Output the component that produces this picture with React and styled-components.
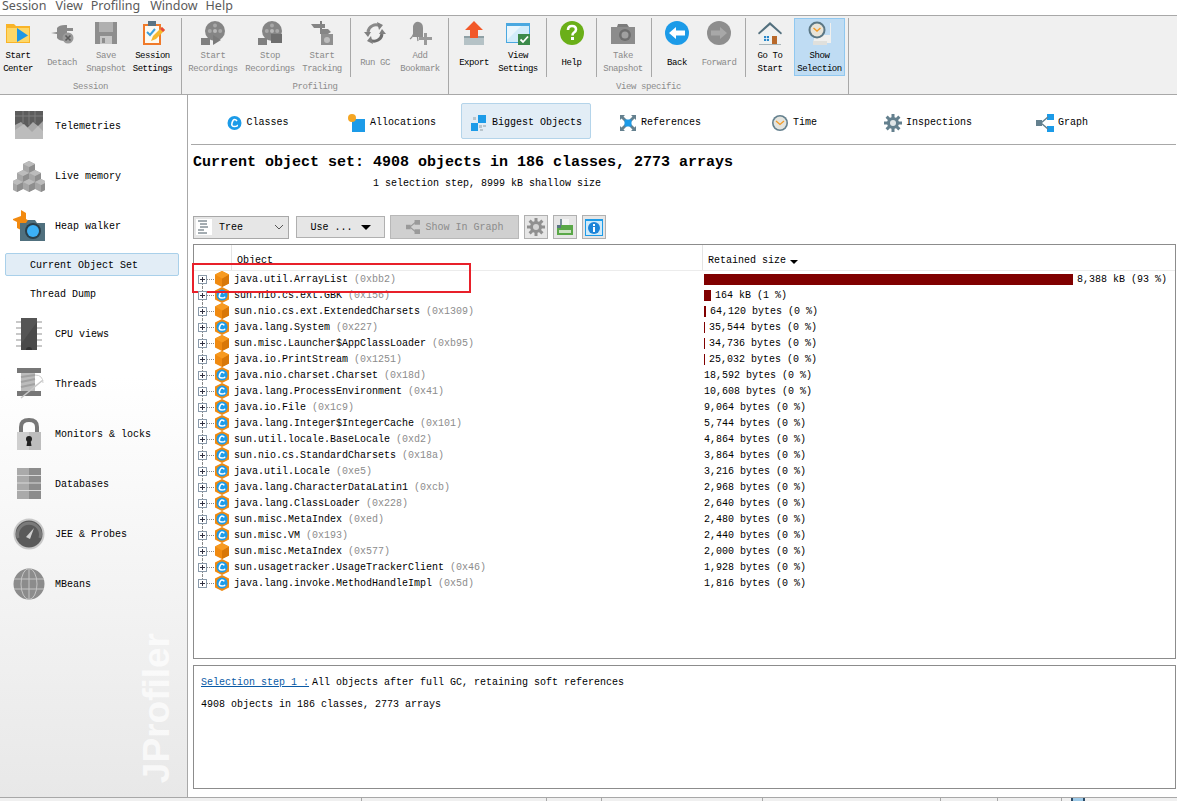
import styled, { createGlobalStyle } from "styled-components";

const GlobalStyle = createGlobalStyle`
  html, body {
    margin: 0;
    padding: 0;
    background: #fff;
    overflow: hidden;
  }
  * { box-sizing: border-box; }
`

const Page = styled.div`
  width: 1177px;
  height: 801px;
  display: flex;
  flex-direction: column;
  overflow: hidden;
  font-family: "Liberation Mono", monospace;
  font-size: 10px;
  color: #000;
  background: #fff;
`
const MenuBar = styled.div`
  height: 16px;
  flex: none;
  display: flex;
  padding-left: 2px;
  overflow: hidden;
  border-bottom: 1px solid #a8a8a8;
`
const MenuItem = styled.div`
  font-family: "Noto Sans", sans-serif;
  font-size: 12.5px;
  line-height: 12px;
  color: #5a5a5a;
  margin-right: ${p => p.$gap}px;
`
const Toolbar = styled.div`
  height: 79px;
  flex: none;
  display: flex;
  background: #f0f0f0;
  border-bottom: 1px solid #a8a8a8;
`
const Group = styled.div`
  width: ${p => p.$width}px;
  height: 76px;
  margin-top: 2px;
  display: flex;
  flex-direction: column;
  border-right: 1px solid #a8a8a8;
`
const GroupButtons = styled.div`
  display: flex;
  height: 62px;
  flex: none;
`
const GroupTitle = styled.div`
  text-align: center;
  font-size: 9px;
  letter-spacing: -0.4px;
  line-height: 14px;
  color: #8c8c8c;
`
const Separator = styled.div`
  width: 1px;
  height: 59px;
  flex: none;
  background: #a8a8a8;
  margin-left: ${p => p.$before || 0}px;
`
const ToolButton = styled.div`
  width: ${p => p.$width}px;
  flex: none;
  display: flex;
  flex-direction: column;
  align-items: center;
  height: 58px;
  border: 1px solid ${p => (p.$active ? "#90c8f0" : "transparent")};
  background: ${p => (p.$active ? "#bfdcf3" : "transparent")};
`
const ToolIcon = styled.div`
  height: 28px;
  flex: none;
  display: flex;
  align-items: center;
  justify-content: center;
`
const ToolLabel = styled.div`
  height: 26px;
  margin-top: 3px;
  flex: none;
  display: flex;
  align-items: center;
  text-align: center;
  white-space: pre;
  font-size: 9px;
  letter-spacing: -0.45px;
  line-height: 13px;
  color: ${p => (p.$disabled ? "#8a8a8a" : "#000")};
`
const Body = styled.div`
  flex: 1;
  display: flex;
  min-height: 0;
`
const Sidebar = styled.div`
  width: 188px;
  flex: none;
  position: relative;
  padding-top: 6px;
  background: linear-gradient(#fff 0, #fff 40%, #e8e8e8 100%);
  border-right: 1px solid #a8a8a8;
  overflow: hidden;
`
const NavItem = styled.div`
  height: 50px;
  display: flex;
  align-items: center;
  padding-left: 13px;
  gap: 10px;
`
const NavIcon = styled.div`
  width: 32px;
  height: 32px;
  flex: none;
`
const SubList = styled.div`
  display: flex;
  flex-direction: column;
  gap: 6px;
  margin: 2px 0 4px 5px;
`
const SubItem = styled.div`
  width: 174px;
  height: 23px;
  line-height: 24px;
  padding-left: 24px;
  border: 1px solid ${p => (p.$selected ? "#a9d0ea" : "transparent")};
  border-radius: 2px;
  background: ${p => (p.$selected ? "#e2edf6" : "transparent")};
`
const Watermark = styled.div`
  position: absolute;
  left: 135px;
  top: 538px;
  writing-mode: vertical-rl;
  transform: rotate(180deg);
  font-family: "Liberation Sans", sans-serif;
  font-weight: bold;
  font-size: 37px;
  line-height: 44px;
  color: rgba(255, 255, 255, 0.7);
`
const Main = styled.div`
  flex: 1;
  min-width: 0;
  display: flex;
  flex-direction: column;
  padding: 0 1px 8px 5px;
`
const TabBar = styled.div`
  height: 50px;
  flex: none;
  display: flex;
  margin-left: -2px;
  padding-top: 8px;
  border-bottom: 1px solid #a8a8a8;
  align-items: flex-start;
`
const Tab = styled.div`
  width: 130px;
  height: 36px;
  flex: none;
  margin: 0 2px;
  padding-top: 3px;
  display: flex;
  align-items: center;
  justify-content: center;
  gap: 4px;
  border: 1px solid ${p => (p.$selected ? "#b4d4ea" : "transparent")};
  border-radius: 2px;
  background: ${p => (p.$selected ? "#e2edf6" : "transparent")};
`
const Heading = styled.h1`
  margin: 9px 0 0;
  font-size: 15px;
  line-height: 18px;
  font-weight: bold;
  white-space: pre;
`
const SubHeading = styled.div`
  margin-top: 5px;
  padding-left: 180px;
  line-height: 14px;
`
const ActionBar = styled.div`
  height: 24px;
  margin-top: 24px;
  flex: none;
  display: flex;
  align-items: center;
`
const Select = styled.div`
  width: 96px;
  height: 23px;
  display: flex;
  align-items: center;
  padding: 0 4px 0 2px;
  gap: 7px;
  border: 1px solid #a8a8a8;
  background: #e6e6e6;
  font-size: 10px;
`
const DropButton = styled.div`
  width: 89px;
  height: 22px;
  margin-left: 7px;
  display: flex;
  align-items: center;
  justify-content: center;
  gap: 8px;
  border: 1px solid #b0b0b0;
  background: #e6e6e6;
`
const DownTriangle = styled.span`
  width: 0;
  height: 0;
  border-left: ${p => p.$size}px solid transparent;
  border-right: ${p => p.$size}px solid transparent;
  border-top: ${p => p.$size}px solid #000;
`
const HeaderTriangle = styled(DownTriangle)`
  margin-bottom: 4px;
`
const GraphButton = styled.div`
  width: 129px;
  height: 24px;
  margin-left: 5px;
  display: flex;
  align-items: center;
  justify-content: center;
  gap: 4px;
  border: 1px solid #b8b8b8;
  background: #d0d0d0;
  color: #8c8c8c;
`
const SquareButton = styled.div`
  width: 24px;
  height: 24px;
  margin-left: ${p => p.$gap}px;
  display: flex;
  align-items: center;
  justify-content: center;
  border: 1px solid #b0b0b0;
  background: #e6e6e6;
`
const TablePanel = styled.div`
  height: 415px;
  margin-top: 5px;
  flex: none;
  border: 1px solid #8c8c8c;
  position: relative;
`
const TableHeader = styled.div`
  height: 26px;
  display: grid;
  grid-template-columns: 37px 471px 1fr;
  border-bottom: 1px solid #ececec;
`
const HeaderCell = styled.div`
  display: flex;
  align-items: flex-end;
  gap: 4px;
  padding: 0 0 2px 5px;
  line-height: 14px;
  border-left: ${p => (p.$first ? "none" : "1px solid #e4e4e4")};
`
const TreeRow = styled.div`
  height: 16px;
  display: grid;
  grid-template-columns: 508px 1fr;
  position: relative;
  &::before {
    content: "";
    position: absolute;
    left: 8px;
    top: ${p => (p.$first ? 8 : 0)}px;
    bottom: ${p => (p.$last ? 8 : 0)}px;
    border-left: 1px dotted #888;
  }
`
const TreeCell = styled.div`
  display: flex;
  align-items: center;
  padding-left: 4px;
  white-space: pre;
`
const Expander = styled.span`
  width: 9px;
  height: 9px;
  flex: none;
  position: relative;
  z-index: 1;
  border: 1px solid #8a9aaa;
  background: linear-gradient(to right, transparent 1px, #334 1px, #334 6px, transparent 6px) center / 100% 1px no-repeat,
    linear-gradient(transparent 1px, #334 1px, #334 6px, transparent 6px) center / 1px 100% no-repeat, #fff;
`
const Connector = styled.span`
  width: 7px;
  flex: none;
  border-top: 1px dotted #888;
`
const ClassIcon = styled.svg`
  flex: none;
  margin-right: 4px;
`
const RowText = styled.span`
  margin-top: 1px;
`
const ObjectId = styled.span`
  color: #8c8c8c;
`
const SizeCell = styled.div`
  display: flex;
  align-items: center;
  padding-left: 2px;
  gap: 4px;
  white-space: pre;
`
const SizeBar = styled.span`
  width: ${p => p.$width}px;
  height: 11px;
  flex: none;
  background: #800000;
`
const Highlight = styled.div`
  position: absolute;
  left: -2px;
  top: 18px;
  width: 279px;
  height: 30px;
  border: 2px solid #e8202a;
  pointer-events: none;
`
const DetailPanel = styled.div`
  flex: 1;
  margin-top: 6px;
  padding: 10px 7px;
  border: 1px solid #8c8c8c;
  line-height: 14px;
`
const DetailLine = styled.div`
  margin-bottom: 8px;
`
const DetailLink = styled.span`
  color: #0a5aa5;
  text-decoration: underline;
  margin-right: 3px;
`
const StatusBar = styled.div`
  height: 4px;
  flex: none;
  display: flex;
  border-top: 1px solid #a8a8a8;
  background: #f0f0f0;
  overflow: hidden;
`
const StatusCell = styled.div`
  width: ${p => p.$width}px;
  flex: none;
  border-right: 1px solid #a8a8a8;
`
const StatusIcon = styled.div`
  width: 14px;
  height: 3px;
  margin-left: 9px;
  background: #9ecae8;
  border-left: 2px solid #2a4a66;
  border-right: 2px solid #2a4a66;
`

// toolbar icons, all on a 24 box
const Ico = ({ children, w = 24, h = 24, vb = "0 0 24 24" }) => (
  <svg width={w} height={h} viewBox={vb}>{children}</svg>
)
const StartCenterIcon = () => (
  <Ico>
    <path d="M0 3h8l2 2h14v17H0z" fill="#f9b428" />
    <path d="M1 7h22v14H1z" fill="#fdd768" />
    <path d="M11 7l11 7.5L11 21z" fill="#1e96e6" />
  </Ico>
)
const DetachIcon = () => (
  <Ico>
    <path d="M1 12l6-1V7q2-3 8-3h2v16h-2q-6 0-8-3v-4z" fill="#8a8a8a" />
    <path d="M17 7h6v3h-6zM17 14h2v3h-2z" fill="#8a8a8a" />
    <circle cx="18" cy="17" r="5.5" fill="#9a9a9a" />
    <path d="M15.5 14.5l5 5M20.5 14.5l-5 5" stroke="#5c5c5c" strokeWidth="1.6" />
  </Ico>
)
const SaveIcon = () => (
  <Ico>
    <path d="M1 1h22v22H1z" fill="#8e8e8e" />
    <path d="M5 1h14v10H5z" fill="#b0b0b0" />
    <path d="M6 15h12v8H6z" fill="#c6c6c6" />
    <path d="M8 17h3v5H8z" fill="#8e8e8e" />
  </Ico>
)
const SettingsIcon = () => (
  <Ico>
    <path d="M2 3h18v21H2z" fill="#f07a2a" />
    <path d="M4 5h14v17H4z" fill="#fdfaf2" />
    <path d="M7 0h8v5H7z" fill="#5a7484" />
    <path d="M6 11l3 3 5-6" stroke="#3ca0dc" strokeWidth="2" fill="none" />
    <path d="M10 20l2-5 9-9 3 3-9 9z" fill="#f5b82e" />
    <path d="M19 8l2-2 3 3-2 2z" fill="#e8483c" />
  </Ico>
)
const ReelIcon = ({ stop }) => (
  <Ico>
    <circle cx="14" cy="10" r="10" fill="#858585" />
    <circle cx="14" cy="10" r="2" fill="#b8b8b8" />
    <circle cx="14" cy="4.5" r="2" fill="#a8a8a8" />
    <circle cx="8.8" cy="10" r="2" fill="#a8a8a8" />
    <circle cx="19.2" cy="10" r="2" fill="#a8a8a8" />
    <path d="M0 17h9v7H0z" fill="#808080" />
    {stop ? <path d="M13 13h11v9H13z" fill="#6e6e6e" /> : <path d="M12 14l8 5-8 5z" fill="#7a7a7a" />}
  </Ico>
)
const TrackingIcon = () => (
  <Ico>
    <path d="M10 0h2v10h-2z" fill="#808080" />
    <path d="M1 3h14v4H4zM10 8h8l3 3-3 2h-8z" fill="#858585" />
    <path d="M11 13h12v11H11z" fill="#909090" />
    <circle cx="17" cy="19" r="3" fill="#bdbdbd" />
  </Ico>
)
const GcIcon = () => (
  <Ico>
    <path d="M5 11a8 8 0 0 1 12-6" stroke="#8a8a8a" strokeWidth="3" fill="none" />
    <path d="M19 13a8 8 0 0 1-12 6" stroke="#6f6f6f" strokeWidth="3" fill="none" />
    <path d="M14 1l6 3-4 5zM10 23l-6-3 4-5zM1 11h7l-3 5zM23 13h-7l3-5z" fill="#808080" />
  </Ico>
)
const BookmarkIcon = () => (
  <Ico>
    <path d="M5 5q2-5 6-4t4 6v9H5z" fill="#8e8e8e" />
    <path d="M7 7q-1 8-5 11M9 7q0 8 1 13" stroke="#8e8e8e" strokeWidth="1.3" fill="none" />
    <path d="M16 12h3v4h5v3h-5v5h-3v-5h-5v-3h5z" fill="#9a9a9a" />
  </Ico>
)
const ExportIcon = () => (
  <Ico>
    <path d="M2 15h20v9H2z" fill="#b5c2c6" />
    <path d="M2 15h20v2H2z" fill="#8fa0a5" />
    <path d="M12 0l9 9h-5v8H8V9H3z" fill="#f2592a" />
  </Ico>
)
const ViewSettingsIcon = () => (
  <Ico>
    <path d="M0 2h24v20H0z" fill="#4aa8e0" />
    <path d="M1 5h22v16H1z" fill="#d2ecfa" />
    <path d="M1 5h14l-14 14z" fill="#eaf6fd" />
    <path d="M12 13h12v11H12z" fill="#3c8a4a" />
    <path d="M14.5 18.5l2.5 2.5 5-5.5" stroke="#fff" strokeWidth="1.8" fill="none" />
  </Ico>
)
const HelpIcon = () => (
  <Ico>
    <circle cx="12" cy="12" r="12" fill="#6aaf18" />
    <path d="M8 9q0-4 4-4t4 3.5q0 2-2.5 3.5-1 .7-1 2.5" stroke="#fff" strokeWidth="2.6" fill="none" />
    <path d="M11 16h3v3h-3z" fill="#fff" />
  </Ico>
)
const CameraIcon = () => (
  <Ico>
    <path d="M0 6h24v17H0z" fill="#8c8c8c" />
    <path d="M7 3h9l2 3H6z" fill="#7c7c7c" />
    <circle cx="14" cy="14" r="6" fill="#6e6e6e" />
    <circle cx="14" cy="14" r="3.5" fill="#a0a0a0" />
  </Ico>
)
const BackIcon = () => (
  <Ico>
    <circle cx="12" cy="12" r="12" fill="#1c9be8" />
    <path d="M4 12l7-6v3.5h9v5h-9V18z" fill="#fff" />
  </Ico>
)
const ForwardIcon = () => (
  <Ico>
    <circle cx="12" cy="12" r="12" fill="#8e8e8e" />
    <path d="M20 12l-7-6v3.5H4v5h9V18z" fill="#a8a8a8" />
  </Ico>
)
const HomeIcon = () => (
  <Ico>
    <path d="M4 11h16v13H4z" fill="#eef2f2" />
    <path d="M0 12L12 1l12 11-1 1.5L12 4 1 13.5z" fill="#53707e" />
    <path d="M14 15h5v9h-5z" fill="#b8682a" />
    <path d="M6 15h5v5H6z" fill="#2a86c8" />
    <path d="M8.3 15h.7v5h-.7zM6 17.3h5v.7H6z" fill="#fff" />
    <path d="M1 23h22v1H1z" fill="#a8b4b8" />
  </Ico>
)
const SelectionIcon = () => (
  <Ico>
    <path d="M7 14h15V2h1v20H5z" fill="#f0f0ee" />
    <path d="M5 20h14v4H5z" fill="#e0e0dc" />
    <circle cx="9" cy="9" r="8.5" fill="#5b7784" />
    <circle cx="9" cy="9" r="6.5" fill="#e8e4d8" />
    <path d="M5.5 7L9 10l3.5-3" stroke="#f39a25" strokeWidth="1.4" fill="none" />
  </Ico>
)

// sidebar icons
const Svg32 = ({ children }) => <svg width="32" height="32" viewBox="0 0 32 32">{children}</svg>
const TelemetriesIcon = () => (
  <Svg32>
    <path d="M2 1h28v28H2z" fill="#a8a8a8" />
    <path d="M2 1h28v10l-5 5-5-4-6 6-6-6-6 3z" fill="#5c5c5c" />
    <path d="M2 20l9-6 8 8 6-6 5 5v8H2z" fill="#bcbcbc" />
    <path d="M10 1v12M16 1v14M22 1v12M2 6h28" stroke="#7c7c7c" />
  </Svg32>
)
const memoryCubes = [[16, 1], [10, 10], [22, 10], [4, 19], [16, 19], [28, 19]]
const LiveMemoryIcon = () => (
  <Svg32>
    {memoryCubes.map(([x, y]) => (
      <g key={`${x}-${y}`} transform={`translate(${x} ${y})`}>
        <path d="M-6 3L0 0l6 3v7l-6 3-6-3z" fill="#a6a6a6" />
        <path d="M0 6l6-3v7l-6 3z" fill="#8e8e8e" />
        <path d="M-6 3L0 0l6 3-6 3z" fill="#bcbcbc" />
      </g>
    ))}
  </Svg32>
)
const HeapWalkerIcon = () => (
  <Svg32>
    <path d="M8 0l5 3v6l5 3v5h-9l-1 3-4-2v-6l-4-2V9l8-3z" fill="#f28a10" />
    <path d="M7 13h6l2-3h7l2 3h8v18H7z" fill="#50707e" />
    <circle cx="20" cy="21" r="8" fill="#2a3f4a" />
    <circle cx="20" cy="21" r="6" fill="#3cb0f5" />
  </Svg32>
)
const CpuIcon = () => (
  <Svg32>
    <path d="M3 4h26M3 10h26M3 16h26M3 22h26M3 28h26" stroke="#c8c8c8" strokeWidth="2" />
    <path d="M8 0h16v32H8z" fill="#555" />
    <path d="M8 26L24 4v28H8z" fill="#4a4a4a" />
    <circle cx="16" cy="32" r="3" fill="#333" />
  </Svg32>
)
const ThreadsIcon = () => (
  <Svg32>
    <path d="M4 0h24v5H4zM4 23h24v5H4z" fill="#777" />
    <path d="M8 5h14v18H8z" fill="#bcbcbc" />
    <path d="M8 9l14-2M8 14l14-3M8 19l14-3" stroke="#a2a2a2" strokeWidth="2" />
    <path d="M8 30L30 12" stroke="#c8c8c8" strokeWidth="1.5" />
    <path d="M22 7q8 0 8 8" stroke="#cfcfcf" fill="none" />
  </Svg32>
)
const LockIcon = () => (
  <Svg32>
    <path d="M8 14V9q0-7 8-7t8 7v5" stroke="#777" strokeWidth="4" fill="none" />
    <path d="M4 14h24v18H4z" fill="#cfcfcf" />
    <path d="M16 14h12v18H16z" fill="#bdbdbd" />
    <circle cx="16" cy="21" r="3" fill="#222" />
    <path d="M14.5 22h3l1 6h-5z" fill="#222" />
  </Svg32>
)
const DatabaseIcon = () => (
  <Svg32>
    <path d="M4 0h24v31H4z" fill="#aaa" />
    <path d="M16 0h12v31H16z" fill="#8c8c8c" />
    <path d="M4 7.5h24M4 15h24M4 22.5h24" stroke="#d8d8d8" />
  </Svg32>
)
const ProbesIcon = () => (
  <Svg32>
    <circle cx="16" cy="16" r="15.5" fill="#c8c8c8" />
    <circle cx="16" cy="16" r="13.5" fill="#5a5a5a" />
    <path d="M5 20a11.5 11.5 0 1 1 22 0" stroke="#7a7a7a" strokeWidth="3" fill="none" />
    <path d="M13 19l8-9-4 11z" fill="#d0d0d0" />
  </Svg32>
)
const GlobeIcon = () => (
  <Svg32>
    <circle cx="16" cy="16" r="15.5" fill="#8c8c8c" />
    <path d="M16 .5v31M1 11h30M1 21h30" stroke="#c4c4c4" />
    <ellipse cx="16" cy="16" rx="8" ry="15.5" stroke="#c4c4c4" fill="none" />
  </Svg32>
)

// tab icons
const Svg18 = ({ children, w = 18 }) => <svg width={w} height="18" viewBox={`0 0 ${w} 18`}>{children}</svg>
const ClassesTabIcon = () => (
  <Svg18 w={15}>
    <circle cx="7.5" cy="9" r="7" fill="#1c9be8" />
    <path d="M10 7Q9 5.5 7.5 5.5T5 9t2.5 3.5T10 11" stroke="#fff" strokeWidth="1.6" fill="none" />
  </Svg18>
)
const AllocationsTabIcon = () => (
  <Svg18>
    <path d="M4 5h13v13H4z" fill="#1c9be8" />
    <circle cx="4" cy="4" r="4" fill="#f5a623" />
  </Svg18>
)
const BiggestTabIcon = () => (
  <Svg18>
    <path d="M8 1h8v8H8z" fill="#1c9be8" />
    <path d="M1 9h7v8H1z" fill="#1c9be8" />
    <path d="M3 3h3v3H3zM9 11h3v3H9zM13 11h3v2h-3zM10 15h3v2h-3z" fill="#b8c4cc" />
  </Svg18>
)
const ReferencesTabIcon = () => (
  <Svg18>
    <path d="M1 1h5L4.500 2.500 8 6 6 8 2.500 4.500 1 6zM17 1v5l-1.500-1.500L12 8l-2-2 3.500-3.500L12 1zM1 17v-5l1.500 1.500L6 10l2 2-3.500 3.500L6 17zM17 17h-5l1.500-1.500L10 12l2-2 3.500 3.500L17 12z" fill="#64808e" />
    <path d="M5.5 5.5h7v7h-7z" fill="#1c9be8" />
  </Svg18>
)
const TimeTabIcon = () => (
  <Svg18>
    <circle cx="9" cy="9" r="8" fill="#64808e" />
    <circle cx="9" cy="9" r="6.4" fill="#e4e4de" />
    <path d="M5 7l4 3.5L13 7" stroke="#f39a25" strokeWidth="1.3" fill="none" />
  </Svg18>
)
const GearGlyph = ({ color, hub }) => (
  <>
    <g stroke={color} strokeWidth="3">
      <path d="M9 0v18M0 9h18M2.600 2.600l12.800 12.800M15.400 2.600L2.600 15.400" />
    </g>
    <circle cx="9" cy="9" r="6" fill={color} />
    <circle cx="9" cy="9" r="3" fill={hub} />
  </>
)
const InspectionsTabIcon = () => (
  <Svg18><GearGlyph color="#64808e" hub="#e0e6e8" /></Svg18>
)
const GraphGlyph = ({ color }) => (
  <>
    <path d="M0 6h6v6H0zM11 0h7v6h-7zM11 12h7v6h-7z" fill={color} />
    <path d="M5 9L12 3M5 9l7 6" stroke={color} strokeWidth="1.5" />
  </>
)
const GraphTabIcon = () => (
  <Svg18>
    <path d="M0 6h6v6H0z" fill="#64808e" />
    <path d="M11 0h7v6h-7zM11 12h7v6h-7z" fill="#1c9be8" />
    <path d="M5 9L12 3M5 9l7 6" stroke="#64808e" strokeWidth="1.5" />
  </Svg18>
)
const TreeModeIcon = () => (
  <svg width="16" height="16" viewBox="0 0 16 16">
    <path d="M0 0h16v16H0z" fill="#fff" />
    <path d="M2 2h9M4 5h7M4 8h8M2 11h6M2 14h9" stroke="#4a5a64" />
  </svg>
)
const ChevronIcon = styled.svg`
  margin-left: auto;
`
const ChevronDown = () => (
  <ChevronIcon width="10" height="6" viewBox="0 0 10 6">
    <path d="M1 1l4 4 4-4" stroke="#555" fill="none" />
  </ChevronIcon>
)
const PrintIcon = () => (
  <svg width="16" height="16" viewBox="0 0 16 16">
    <path d="M4 0h8v6H4z" fill="#f4f4f4" />
    <path d="M3 0h2v6H3z" fill="#7a909a" />
    <path d="M0 6h16v10H0z" fill="#5aa848" />
    <path d="M2 11h12v3H2z" fill="#cde2c4" />
    <path d="M0 6h4v3H0z" fill="#5a7484" />
  </svg>
)
const InfoIcon = () => (
  <svg width="18" height="18" viewBox="0 0 18 18">
    <path d="M0 1h18v17H0z" fill="#1c9be8" />
    <path d="M1 3h16v14H1z" fill="#cfeafa" />
    <circle cx="9" cy="10" r="6" fill="#1c84d8" />
    <path d="M8 6h2v2H8zM8 9h2v5H8z" fill="#fff" />
  </svg>
)
const CubeIcon = () => (
  <ClassIcon width="16" height="16" viewBox="0 0 16 16">
    <path d="M8 0l7 3.5v9L8 16l-7-3.5v-9z" fill="#f08a10" />
    <path d="M8 7.5l7-4v9L8 16z" fill="#d87708" />
    <path d="M8 0l7 3.5-7 4-7-4z" fill="#f79a20" />
  </ClassIcon>
)
const HexClassIcon = () => (
  <ClassIcon width="16" height="16" viewBox="0 0 16 16">
    <path d="M8 0l7 3.5v9L8 16l-7-3.5v-9z" fill="#f08a10" />
    <circle cx="8" cy="8" r="5.5" fill="#1c9be8" />
    <path d="M10.3 6.300Q9.500 5 8 5T5.500 8 8 11t2.300-1.300" stroke="#fff" strokeWidth="1.6" fill="none" />
  </ClassIcon>
)

const toolGroups = [
  {
    title: "Session", width: 182, items: [
      { w: 36, label: "Start\nCenter", Icon: StartCenterIcon },
      { w: 52, label: "Detach", Icon: DetachIcon, off: true },
      { w: 36, label: "Save\nSnapshot", Icon: SaveIcon, off: true },
      { w: 57, label: "Session\nSettings", Icon: SettingsIcon },
    ],
  },
  {
    title: "Profiling", width: 267, items: [
      { w: 62, label: "Start\nRecordings", Icon: () => <ReelIcon />, off: true },
      { w: 52, label: "Stop\nRecordings", Icon: () => <ReelIcon stop />, off: true },
      { w: 52, label: "Start\nTracking", Icon: TrackingIcon, off: true },
      { sep: 2 },
      { w: 48, label: "Run GC", Icon: GcIcon, off: true },
      { w: 42, label: "Add\nBookmark", Icon: BookmarkIcon, off: true },
    ],
  },
  {
    title: "View specific", width: 400, items: [
      { w: 50, label: "Export", Icon: ExportIcon },
      { w: 38, label: "View\nSettings", Icon: ViewSettingsIcon },
      { sep: 9 },
      { w: 49, label: "Help", Icon: HelpIcon },
      { sep: 0 },
      { w: 52, label: "Take\nSnapshot", Icon: CameraIcon, off: true },
      { sep: 2 },
      { w: 50, label: "Back", Icon: BackIcon },
      { w: 34, label: "Forward", Icon: ForwardIcon, off: true },
      { sep: 9 },
      { w: 48, label: "Go To\nStart", Icon: HomeIcon },
      { w: 51, label: "Show\nSelection", Icon: SelectionIcon, active: true },
    ],
  },
]

const tabs = [
  { label: "Classes", Icon: ClassesTabIcon },
  { label: "Allocations", Icon: AllocationsTabIcon },
  { label: "Biggest Objects", Icon: BiggestTabIcon, selected: true },
  { label: "References", Icon: ReferencesTabIcon },
  { label: "Time", Icon: TimeTabIcon },
  { label: "Inspections", Icon: InspectionsTabIcon },
  { label: "Graph", Icon: GraphTabIcon },
]

const rows = [
  ["java.util.ArrayList", "0xbb2", "8,388 kB (93 %)", 369, true],
  ["sun.nio.cs.ext.GBK", "0x156", "164 kB (1 %)", 7],
  ["sun.nio.cs.ext.ExtendedCharsets", "0x1309", "64,120 bytes (0 %)", 2, true],
  ["java.lang.System", "0x227", "35,544 bytes (0 %)", 1],
  ["sun.misc.Launcher$AppClassLoader", "0xb95", "34,736 bytes (0 %)", 1, true],
  ["java.io.PrintStream", "0x1251", "25,032 bytes (0 %)", 1, true],
  ["java.nio.charset.Charset", "0x18d", "18,592 bytes (0 %)", 0],
  ["java.lang.ProcessEnvironment", "0x41", "10,608 bytes (0 %)", 0],
  ["java.io.File", "0x1c9", "9,064 bytes (0 %)", 0],
  ["java.lang.Integer$IntegerCache", "0x101", "5,744 bytes (0 %)", 0],
  ["sun.util.locale.BaseLocale", "0xd2", "4,864 bytes (0 %)", 0],
  ["sun.nio.cs.StandardCharsets", "0x18a", "3,864 bytes (0 %)", 0],
  ["java.util.Locale", "0xe5", "3,216 bytes (0 %)", 0],
  ["java.lang.CharacterDataLatin1", "0xcb", "2,968 bytes (0 %)", 0],
  ["java.lang.ClassLoader", "0x228", "2,640 bytes (0 %)", 0],
  ["sun.misc.MetaIndex", "0xed", "2,480 bytes (0 %)", 0],
  ["sun.misc.VM", "0x193", "2,440 bytes (0 %)", 0],
  ["sun.misc.MetaIndex", "0x577", "2,000 bytes (0 %)", 0, true],
  ["sun.usagetracker.UsageTrackerClient", "0x46", "1,928 bytes (0 %)", 0],
  ["java.lang.invoke.MethodHandleImpl", "0x5d", "1,816 bytes (0 %)", 0],
]

const NavEntry = ({ Icon, label }) => (
  <NavItem>
    <NavIcon><Icon /></NavIcon>
    {label}
  </NavItem>
)

const App = () => {
  return (
    <Page>
      <GlobalStyle />
      <MenuBar>
        <MenuItem $gap={9}>Session</MenuItem>
        <MenuItem $gap={8}>View</MenuItem>
        <MenuItem $gap={10}>Profiling</MenuItem>
        <MenuItem $gap={8}>Window</MenuItem>
        <MenuItem $gap={0}>Help</MenuItem>
      </MenuBar>
      <Toolbar>
        {toolGroups.map(group => (
          <Group key={group.title} $width={group.width}>
            <GroupButtons>
              {group.items.map((item, i) =>
                item.label ? (
                  <ToolButton key={i} $width={item.w} $active={item.active}>
                    <ToolIcon><item.Icon /></ToolIcon>
                    <ToolLabel $disabled={item.off}>{item.label}</ToolLabel>
                  </ToolButton>
                ) : (
                  <Separator key={i} $before={item.sep} />
                )
              )}
            </GroupButtons>
            <GroupTitle>{group.title}</GroupTitle>
          </Group>
        ))}
      </Toolbar>
      <Body>
        <Sidebar>
          <NavEntry Icon={TelemetriesIcon} label="Telemetries" />
          <NavEntry Icon={LiveMemoryIcon} label="Live memory" />
          <NavEntry Icon={HeapWalkerIcon} label="Heap walker" />
          <SubList>
            <SubItem $selected>Current Object Set</SubItem>
            <SubItem>Thread Dump</SubItem>
          </SubList>
          <NavEntry Icon={CpuIcon} label="CPU views" />
          <NavEntry Icon={ThreadsIcon} label="Threads" />
          <NavEntry Icon={LockIcon} label="Monitors & locks" />
          <NavEntry Icon={DatabaseIcon} label="Databases" />
          <NavEntry Icon={ProbesIcon} label="JEE & Probes" />
          <NavEntry Icon={GlobeIcon} label="MBeans" />
          <Watermark>JProfiler</Watermark>
        </Sidebar>
        <Main>
          <TabBar>
            {tabs.map(tab => (
              <Tab key={tab.label} $selected={tab.selected}>
                <tab.Icon />
                {tab.label}
              </Tab>
            ))}
          </TabBar>
          <Heading>Current object set: 4908 objects in 186 classes, 2773 arrays</Heading>
          <SubHeading>1 selection step, 8999 kB shallow size</SubHeading>
          <ActionBar>
            <Select>
              <TreeModeIcon />
              Tree
              <ChevronDown />
            </Select>
            <DropButton>
              Use ...
              <DownTriangle $size={5} />
            </DropButton>
            <GraphButton>
              <svg width="16" height="14" viewBox="0 0 18 18"><GraphGlyph color="#9a9a9a" /></svg>
              Show In Graph
            </GraphButton>
            <SquareButton $gap={5}>
              <svg width="18" height="18" viewBox="0 0 18 18"><GearGlyph color="#909090" hub="#d4d4d4" /></svg>
            </SquareButton>
            <SquareButton $gap={5}><PrintIcon /></SquareButton>
            <SquareButton $gap={5}><InfoIcon /></SquareButton>
          </ActionBar>
          <TablePanel>
            <TableHeader>
              <HeaderCell $first />
              <HeaderCell>Object</HeaderCell>
              <HeaderCell>
                Retained size
                <HeaderTriangle $size={4} />
              </HeaderCell>
            </TableHeader>
            {rows.map(([name, id, size, bar, cube], i) => (
              <TreeRow key={id} $first={i === 0} $last={i === rows.length - 1}>
                <TreeCell>
                  <Expander />
                  <Connector />
                  {cube ? <CubeIcon /> : <HexClassIcon />}
                  <RowText>{name} <ObjectId>({id})</ObjectId></RowText>
                </TreeCell>
                <SizeCell>
                  {bar > 0 && <SizeBar $width={bar} />}
                  <RowText>{size}</RowText>
                </SizeCell>
              </TreeRow>
            ))}
            <Highlight />
          </TablePanel>
          <DetailPanel>
            <DetailLine>
              <DetailLink>Selection step 1 :</DetailLink>All objects after full GC, retaining soft references
            </DetailLine>
            <DetailLine>4908 objects in 186 classes, 2773 arrays</DetailLine>
          </DetailPanel>
        </Main>
      </Body>
      <StatusBar>
        <StatusCell $width={362} />
        <StatusCell $width={185} />
        <StatusCell $width={55} />
        <StatusCell $width={161} />
        <StatusCell $width={178} />
        <StatusCell $width={57} />
        <StatusCell $width={64} />
        <StatusIcon />
      </StatusBar>
    </Page>
  )
}

export default App
